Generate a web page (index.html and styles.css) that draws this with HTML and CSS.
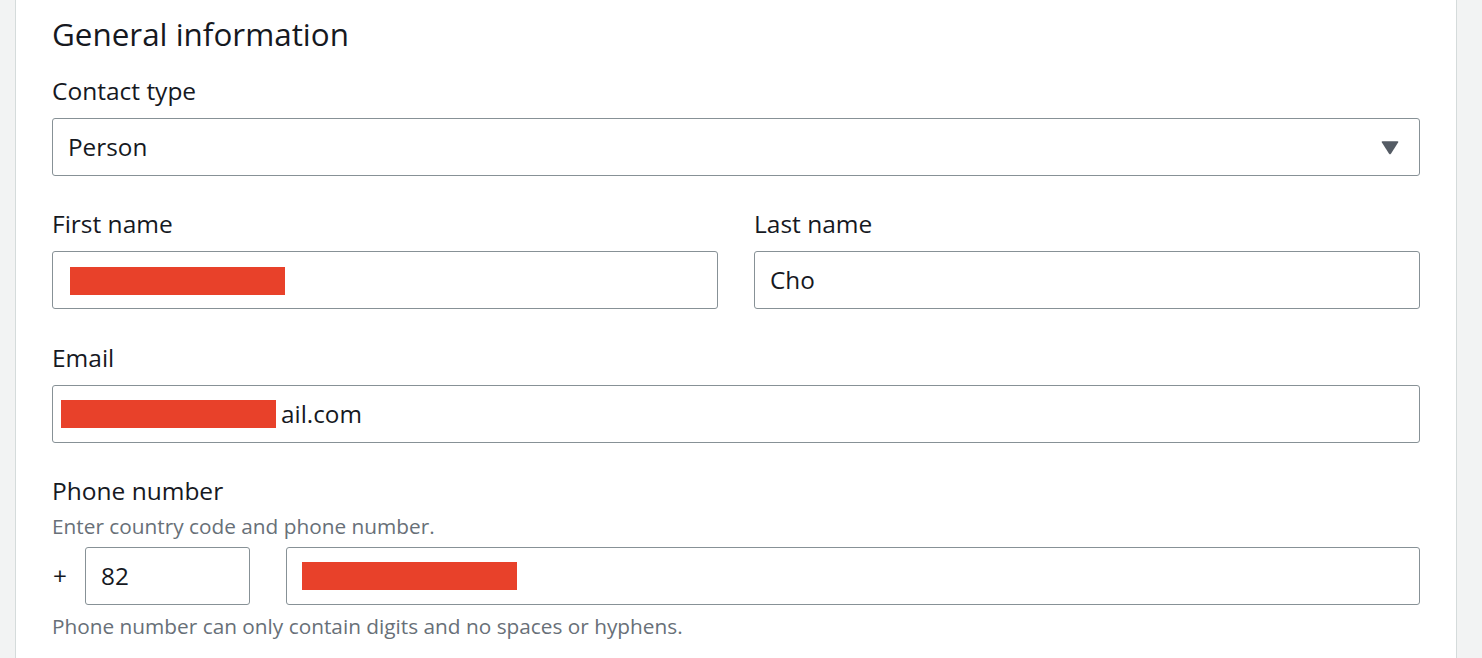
FILE: index.html
```html
<!DOCTYPE html>
<html lang="en">
<head>
<meta charset="utf-8">
<title>General information</title>
<link rel="stylesheet" href="styles.css">
</head>
<body>
<div class="page">
  <section class="panel">
    <h2 class="panel-title">General information</h2>

    <div class="field field-first">
      <div class="label">Contact type</div>
      <div class="control select">
        <span class="value">Person</span>
        <svg class="caret" width="18" height="15" viewBox="0 0 18 15" aria-hidden="true">
          <path d="M1.5 1.2 H16.5 Q17.8 1.2 17.1 2.4 L10.1 13.6 Q9 15.2 7.9 13.6 L0.9 2.4 Q0.2 1.2 1.5 1.2 Z" fill="#545b64"/>
        </svg>
      </div>
    </div>

    <div class="field">
      <div class="name-row">
        <div class="name-col">
          <div class="label">First name</div>
          <div class="control"><span class="redact redact-first"></span></div>
        </div>
        <div class="name-col">
          <div class="label">Last name</div>
          <div class="control"><span class="value">Cho</span></div>
        </div>
      </div>
    </div>

    <div class="field field-email">
      <div class="label">Email</div>
      <div class="control control-email"><span class="redact redact-email"></span><span class="value email-tail">ail.com</span></div>
    </div>

    <div class="field field-phone">
      <div class="label">Phone number</div>
      <div class="desc">Enter country code and phone number.</div>
      <div class="phone-row">
        <span class="plus">+</span>
        <div class="control country"><span class="value">82</span></div>
        <div class="control phone"><span class="redact redact-phone"></span></div>
      </div>
      <div class="help">Phone number can only contain digits and no spaces or hyphens.</div>
    </div>
  </section>
</div>
</body>
</html>
```

FILE: styles.css
```css
* { box-sizing: border-box; }

html, body {
  margin: 0;
  padding: 0;
  background: #f2f3f3;
}

body {
  font-family: "Open Sans", "Noto Sans", "Liberation Sans", sans-serif;
  color: #16191f;
  height: 658px;
  overflow: hidden;
}

.page {
  padding-left: 15px;
}

.panel {
  width: 1442px;
  height: 658px;
  overflow: hidden;
  background: #ffffff;
  border-left: 1px solid #d5dbdb;
  border-right: 1px solid #d5dbdb;
  padding: 14px 36px 0 36px;
}

.panel-title {
  margin: 0;
  font-size: 31.4px;
  line-height: 40px;
  font-weight: 500;
  color: #16191f;
}

.field { margin-top: 31px; }
.field-first { margin-top: 20px; }
.field-email { margin-top: 32px; }
.field-phone { margin-top: 31px; }

.label {
  font-size: 24.5px;
  line-height: 34px;
  font-weight: 400;
  margin-bottom: 10px;
  color: #16191f;
}

.control {
  height: 58px;
  border: 1px solid #879196;
  border-radius: 3px;
  background: #ffffff;
  display: flex;
  align-items: center;
  padding: 0 15px;
}

.value {
  font-size: 24.3px;
  line-height: 34px;
  color: #16191f;
}

.select {
  justify-content: space-between;
  padding-right: 20px;
}

.caret { display: block; margin-top: 1px; }

.name-row {
  display: grid;
  grid-template-columns: 1fr 1fr;
  column-gap: 36px;
}

.redact {
  display: inline-block;
  height: 28px;
  width: 215px;
  background: #e8412a;
  flex: none;
}

.redact-first { margin-left: 2px; margin-top: 2px; }
.control-email { padding-left: 8px; }
.email-tail { margin-left: 5px; }

.desc {
  font-size: 20.8px;
  line-height: 30px;
  color: #687078;
  margin-top: -7px;
}

.phone-row {
  margin-top: 6px;
  display: flex;
  align-items: center;
}

.plus {
  font-size: 24.3px;
  line-height: 34px;
  font-weight: 500;
  width: 33px;
  flex: none;
  padding-left: 1px;
}

.country {
  width: 165px;
  flex: none;
}

.phone {
  flex: 1;
  margin-left: 36px;
}

.help {
  margin-top: 6px;
  font-size: 20.8px;
  line-height: 30px;
  color: #687078;
}
```
